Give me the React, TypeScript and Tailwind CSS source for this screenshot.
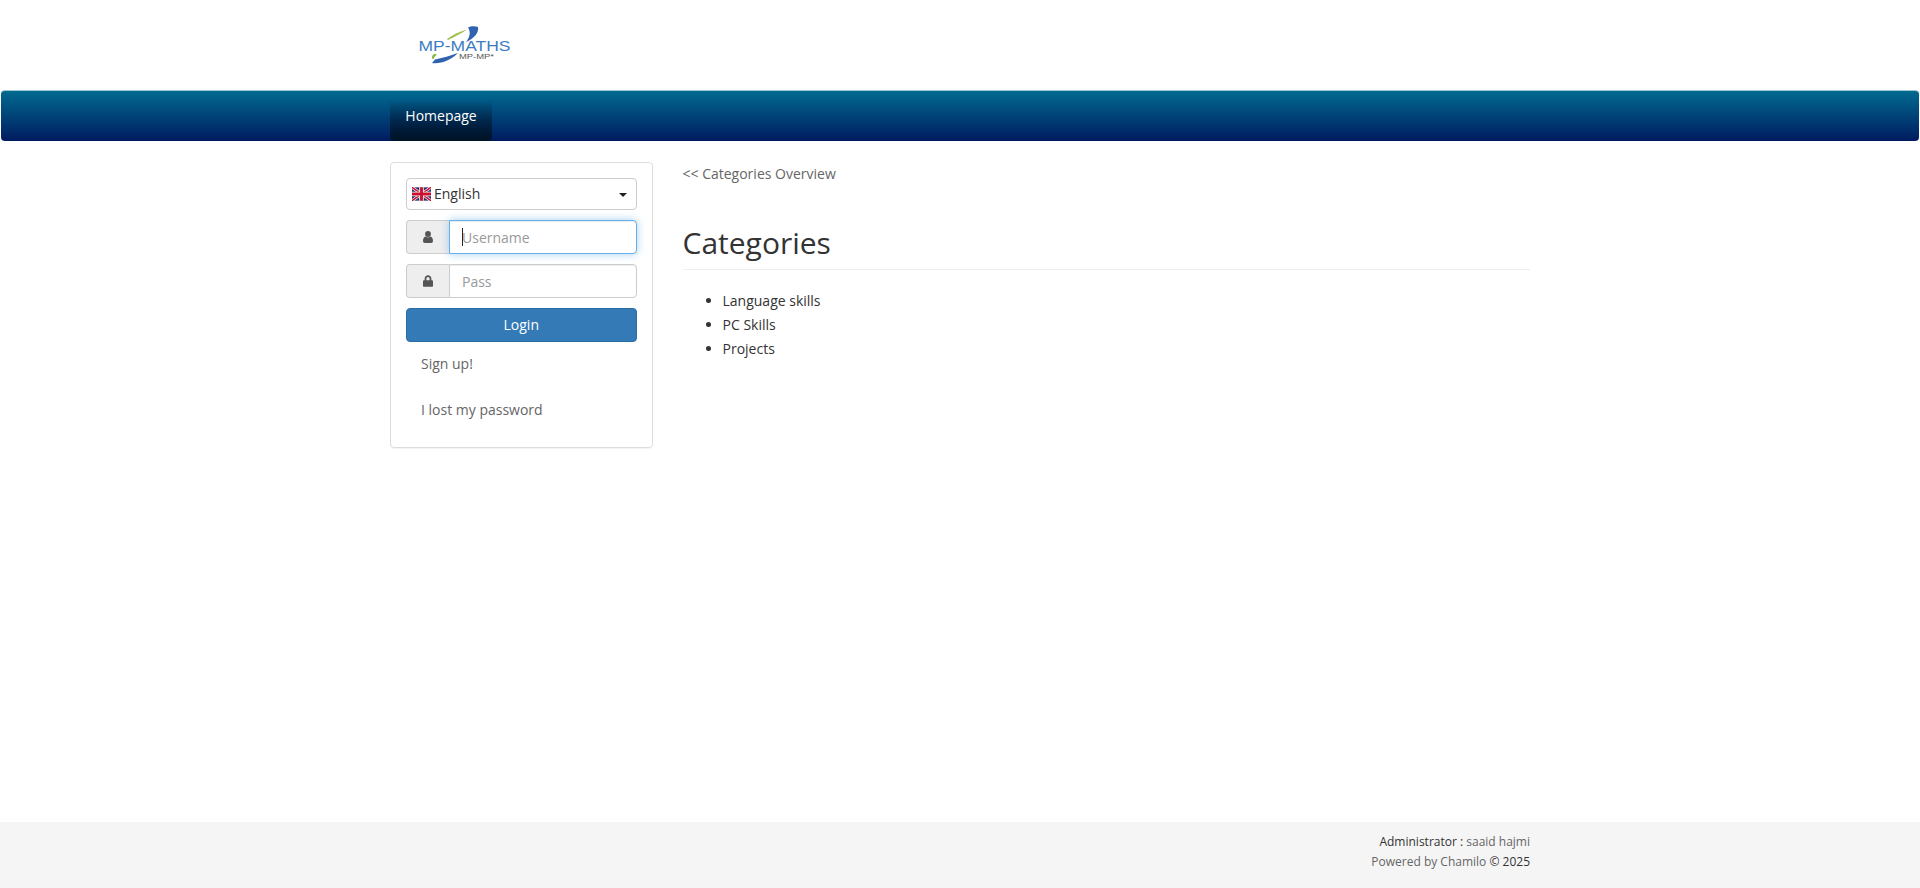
import { FaLock } from "react-icons/fa";

// Site logo: two swooshes and the wordmark
function Logo() {
  return (
    <svg width="110" height="60" viewBox="0 0 110 60" className="block">
      <path d="M58 12.5 C61 11 65 11 68 12 C69 17 65 23 56 27 C60 22 61 17 58 12.5 Z" fill="#2f62b0" />
      <path d="M37 24 C43 19.5 50 16.5 57 14.5 C52 18 45 21.5 38 25 Z" fill="#9cc04a" />
      <path d="M22 48 C30 49.5 41 45 48 38 C42 40 31 43.5 25 44.5 Z" fill="#2f62b0" />
      <path d="M24 39 C21.5 41 21.5 43.5 23.5 44.5 C23.5 42.5 25 41 27 39.5 Z" fill="#7db73c" />
      <text x="8.5" y="36" fontFamily="'Liberation Sans', sans-serif" fontSize="14.5" textLength="92" lengthAdjust="spacingAndGlyphs" fill="#3d7cc2">
        MP-MATHS
      </text>
      <text x="49" y="44" fontFamily="'Liberation Sans', sans-serif" fontSize="7" textLength="35" lengthAdjust="spacingAndGlyphs" fill="#555555">
        MP-MP*
      </text>
    </svg>
  );
}

// Union Jack shown in the language selector
function UkFlag() {
  return (
    <svg width="19" height="14" viewBox="0 0 60 42" className="block shrink-0">
      <rect width="60" height="42" fill="#27306e" />
      <path d="M0 0 L60 42 M60 0 L0 42" stroke="#ffffff" strokeWidth="9" />
      <path d="M0 0 L60 42 M60 0 L0 42" stroke="#c8102e" strokeWidth="5" />
      <path d="M30 0 V42 M0 21 H60" stroke="#ffffff" strokeWidth="14" />
      <path d="M30 0 V42 M0 21 H60" stroke="#c8102e" strokeWidth="9" />
    </svg>
  );
}

// Bust glyph with a round head and sloped shoulders
function UserGlyph() {
  return (
    <svg width="10" height="12" viewBox="0 0 10 12" fill="currentColor" className="block">
      <circle cx="5" cy="3" r="2.9" />
      <path d="M0 10 C0 7.6 1 6 2.4 5.6 C3.8 6.7 6.2 6.7 7.6 5.6 C9 6 10 7.6 10 10 C10 11.2 9.2 12 8.2 12 H1.8 C0.8 12 0 11.2 0 10 Z" />
    </svg>
  );
}

function InputRow({ icon, placeholder, focused }: { icon: React.ReactNode; placeholder: string; focused?: boolean }) {
  return (
    <div className="flex h-[34px]">
      <span className="flex w-[43px] shrink-0 items-center justify-center rounded-l-[4px] border border-r-0 border-[#cccccc] bg-[#eeeeee] text-[12px] text-[#555555]">
        {icon}
      </span>
      <div className="relative min-w-0 flex-1">
        <input
          readOnly
          placeholder={placeholder}
          className={
            focused
              ? "h-full w-full rounded-r-[4px] border border-[#66afe9] bg-white px-3 text-[14px] shadow-[inset_0_1px_1px_rgba(0,0,0,0.075),0_0_8px_rgba(102,175,233,0.6)] outline-none placeholder:text-[#999999]"
              : "h-full w-full rounded-r-[4px] border border-[#cccccc] bg-white px-3 text-[14px] shadow-[inset_0_1px_1px_rgba(0,0,0,0.075)] outline-none placeholder:text-[#999999]"
          }
        />
        {focused && <span className="absolute left-[13px] top-[8px] h-[18px] w-px bg-[#222222]" />}
      </div>
    </div>
  );
}

export default function App() {
  return (
    <div className="flex min-h-screen flex-col bg-white font-['Open_Sans',sans-serif] text-[14px] leading-[20px] text-[#333333]">
      <header className="h-[90px]">
        <div className="mx-auto w-[1170px] pl-[35px] pt-[15px]">
          <Logo />
        </div>
      </header>

      <nav className="mx-px h-[51px] rounded-[4px] border-t border-t-[#9cc5d6] bg-gradient-to-b from-[#006a8f] to-[#001a60]">
        <div className="mx-auto w-[1170px] px-[15px]">
          <a className="flex h-[50px] w-[102px] items-center justify-center rounded-b-[4px] bg-gradient-to-b from-[#00627f]/0 from-[18%] to-[#001426] pb-px text-white">
            Homepage
          </a>
        </div>
      </nav>

      <main className="mx-auto flex w-[1170px] flex-1 items-start px-[15px] pt-[21px]">
        <aside className="flex w-[262.5px] shrink-0 flex-col rounded-[4px] border border-[#dddddd] p-[15px] pb-[17px] shadow-[0_1px_1px_rgba(0,0,0,0.05)]">
          <div className="flex h-[32px] items-center gap-[3px] rounded-[4px] border border-[#cccccc] pb-px pl-[5px] pr-[9px]">
            <UkFlag />
            <span>English</span>
            <span className="ml-auto mt-[3px] border-x-[4px] border-t-[4px] border-x-transparent border-t-[#222222]" />
          </div>
          <div className="mt-[10px] flex flex-col gap-[10px]">
            <InputRow icon={<UserGlyph />} placeholder="Username" focused />
            <InputRow icon={<FaLock className="w-[10px]" />} placeholder="Pass" />
          </div>
          <button className="mt-[10px] h-[34px] rounded-[4px] border border-[#2e6da4] bg-[#337ab7] text-white">Login</button>
          <div className="mt-[2px] flex flex-col gap-[6px] text-[#666666]">
            <a className="block px-[15px] py-[10px]">Sign up!</a>
            <a className="block px-[15px] py-[10px]">I lost my password</a>
          </div>
        </aside>

        <section className="ml-[30px] min-w-0 flex-1">
          <a className="block pt-[2px] text-[#666666]">&lt;&lt; Categories Overview</a>
          <h2 className="mt-[42px] border-b border-[#eeeeee] pb-[10px] text-[30px] leading-[33px] text-[#333333]">Categories</h2>
          <ul className="mt-[19px] list-disc pl-10 leading-[24px] text-[#333333]">
            <li>Language skills</li>
            <li>PC Skills</li>
            <li>Projects</li>
          </ul>
        </section>
      </main>

      <footer className="h-[66px] bg-[#f5f5f5] pt-[10px] text-[12px] text-[#666666]">
        <div className="mx-auto w-[1170px] px-[15px] text-right">
          <div>
            <span className="text-[#333333]">Administrator : </span>saaid hajmi
          </div>
          <div>
            Powered by Chamilo <span className="text-[#333333]">© 2025</span>
          </div>
        </div>
      </footer>
    </div>
  );
}
